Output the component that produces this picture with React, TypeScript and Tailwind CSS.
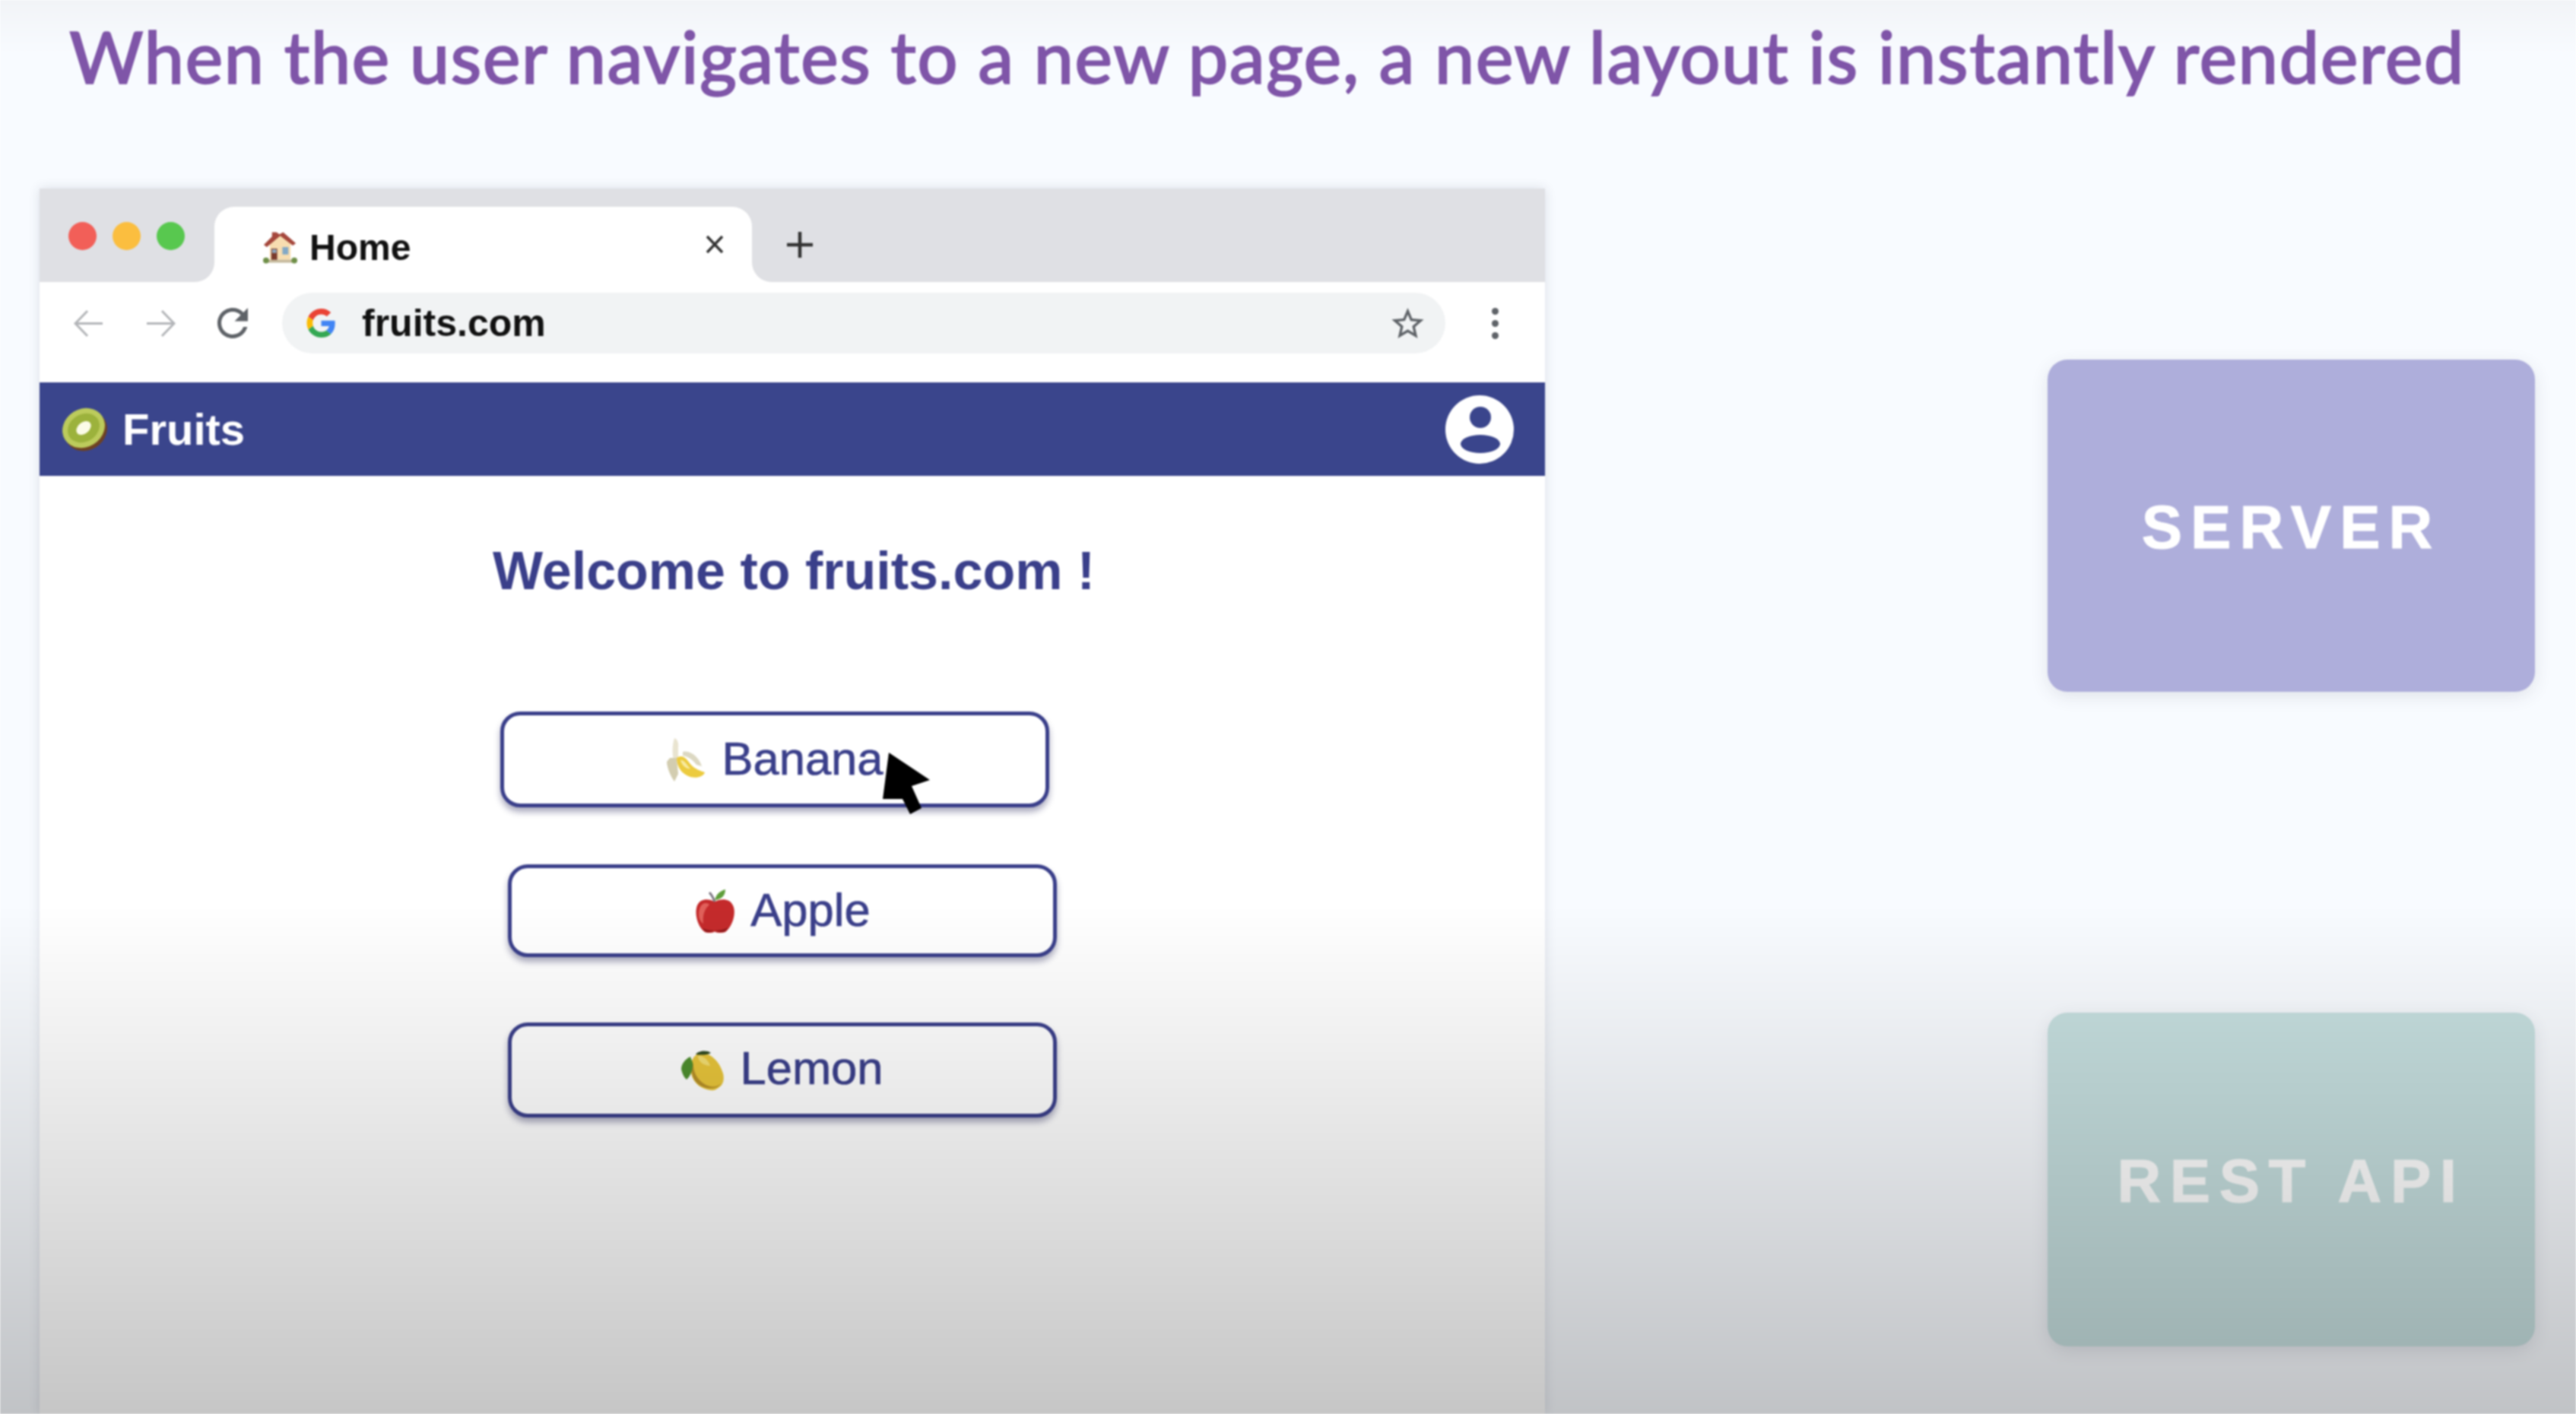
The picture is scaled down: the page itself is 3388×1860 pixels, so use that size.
import React from "react";

const House = () => (
  <svg viewBox="0 0 46 46" className="w-[45px] h-[46px] shrink-0">
    <path d="M9 17 L23 6 L37 17 V40 H9 Z" fill="#f7ddb0" />
    <path d="M1 20 L12 9 V3 H18 L22 6 L27 3 L44 18 L40 21 L23 8 L5 23 Z" fill="#a5473c" />
    <rect x="11" y="25" width="8" height="16" fill="#7a3b2c" />
    <rect x="12" y="26" width="6" height="5" fill="#8fa6bb" />
    <rect x="26" y="23" width="8" height="10" fill="#83a9c6" />
    <rect x="7" y="40" width="32" height="4" fill="#c5b99c" />
    <ellipse cx="4" cy="41" rx="4" ry="4" fill="#6f8f48" />
    <ellipse cx="42" cy="41" rx="4" ry="4" fill="#6f8f48" />
  </svg>
);

const Kiwi = () => (
  <svg viewBox="0 0 60 60" className="w-[60px] h-[60px] shrink-0">
    <ellipse cx="31" cy="32" rx="29" ry="25" transform="rotate(-32 31 32)" fill="#6e4222" />
    <ellipse cx="28" cy="28" rx="29" ry="25" transform="rotate(-32 28 28)" fill="#bccb5c" />
    <ellipse cx="28" cy="28" rx="22" ry="18" transform="rotate(-32 28 28)" fill="#9cb23c" />
    <ellipse cx="28" cy="28" rx="11" ry="7.5" transform="rotate(-40 28 28)" fill="#fbfbe8" />
  </svg>
);

const Banana = () => (
  <svg viewBox="0 0 51 59" className="w-[51px] h-[59px] shrink-0">
    <path d="M11 1 C15 2 17 8 16 14 L16 28 L10 30 C8 22 8 10 11 1 Z" fill="#e9e4d0" />
    <path d="M5 27 L14 27 L16 48 L11 58 C5 50 1 38 1 32 Z" fill="#d3cdb0" />
    <path d="M22 19 C32 16 44 27 47 38 L40 36 C34 28 28 25 22 24 Z" fill="#dcd8c2" />
    <path d="M14 27 C22 22 26 27 32 35 C38 42 46 44 51 46 C49 52 40 54 32 52 C22 49 14 40 14 27 Z" fill="#eccb3f" />
    <path d="M19 30 C24 29 27 36 32 41 C28 42 21 38 19 30 Z" fill="#f8ea9e" />
  </svg>
);

const Apple = () => (
  <svg viewBox="0 0 55 59" className="w-[55px] h-[59px] shrink-0">
    <path d="M27 17 C20 13 8 12 4 22 C0 32 4 50 14 57 C18 59 24 58 27 56.5 C30 58 36 59 41 57 C50 50 56 32 51 22 C47 12 34 13 27 17 Z" fill="#c42a2b" />
    <path d="M14 19 C9 20 6 26 6 34 C6 40 9 44 12 46 C11 36 13 27 20 21 C18 19 16 19 14 19 Z" fill="#e0605a" />
    <path d="M11 52 C20 56 35 56 45 51 C42 55 40 57 37 57 C33 57 30 56 27 55 C24 56 21 57 17 57 C15 57 13 55 11 52 Z" fill="#8f1a1c" />
    <path d="M27 17 C25 12 23 8 20 5" stroke="#7b7580" strokeWidth="3" fill="none" />
    <path d="M27 15 C29 7 34 3 41 1 C41 9 36 14 27 15 Z" fill="#5f9e3a" />
  </svg>
);

const Lemon = () => (
  <svg viewBox="0 0 57 56" className="w-[57px] h-[56px] shrink-0">
    <path d="M26 5 C38 5 50 15 55 32 C57 40 55 47 50 50 C46 53 44 55 38 54 C28 53 16 46 13 32 C11 20 14 7 26 5 Z" fill="#e8c53a" />
    <path d="M16 18 C15 28 20 40 32 47 C40 51 48 50 53 45 C46 55 28 53 19 43 C13 35 12 25 16 18 Z" fill="#b58f28" />
    <path d="M22 9 C28 8 36 14 38 22 C32 22 22 18 22 9 Z" fill="#f3de72" />
    <path d="M12 10 C5 13 0 20 0 26 C1 32 4 38 7 40 C12 36 16 26 15 18 Z" fill="#4e8f2e" />
    <path d="M19 7 C22 2 34 1 39 5 C34 8 26 8 19 7 Z" fill="#2f4a20" />
  </svg>
);

const Google = () => (
  <svg viewBox="0 0 48 48" className="w-[39px] h-[38px] shrink-0">
    <path fill="#EA4335" d="M24 9.5c3.54 0 6.71 1.22 9.21 3.6l6.85-6.85C35.9 2.38 30.47 0 24 0 14.62 0 6.51 5.38 2.56 13.22l7.98 6.19C12.43 13.72 17.74 9.5 24 9.5z" />
    <path fill="#4285F4" d="M46.98 24.55c0-1.57-.15-3.09-.38-4.55H24v9.02h12.94c-.58 2.96-2.26 5.48-4.78 7.18l7.73 6c4.51-4.18 7.09-10.36 7.09-17.65z" />
    <path fill="#FBBC05" d="M10.53 28.59c-.48-1.45-.76-2.99-.76-4.59s.27-3.14.76-4.59l-7.98-6.19C.92 16.46 0 20.12 0 24c0 3.88.92 7.54 2.56 10.78l7.97-6.19z" />
    <path fill="#34A853" d="M24 48c6.48 0 11.93-2.13 16.09-5.81l-7.73-6c-2.15 1.45-4.92 2.3-8.36 2.3-6.26 0-11.57-4.22-13.47-9.91l-7.98 6.19C6.51 42.62 14.62 48 24 48z" />
  </svg>
);

const Fruit = ({ icon, label, gap, className, lift }: { icon: React.ReactNode; label: string; gap: string; className: string; lift: string }) => (
  <div className={`relative flex items-center justify-center rounded-[26px] border-[5px] border-[#3a3f8a] shadow-[0_6px_9px_rgba(40,40,90,0.4)] ${gap} ${className}`}>
    {icon}
    <span className={`text-[61.5px] leading-none text-[#3a3f8a] [-webkit-text-stroke:0.7px_#3a3f8a] ${lift}`}>{label}</span>
  </div>
);

const Card = ({ label, bg, tracking, className }: { label: string; bg: string; tracking: string; className: string }) => (
  <div className={`flex items-center justify-center rounded-[26px] pt-[5px] shadow-[0_6px_24px_-2px_rgba(60,60,80,0.14)] ${bg} ${className}`}>
    <span className={`text-[80px] leading-none font-bold text-white [-webkit-text-stroke:1px_white] ${tracking}`}>{label}</span>
  </div>
);

export default function App() {
  return (
    <div className="relative w-[3388px] h-[1860px] overflow-hidden flex flex-col bg-[linear-gradient(180deg,#f2f4f7_0px,#f8fbff_70px)] font-['Liberation_Sans',sans-serif] blur-[0.8px]">
      <header className="h-[248px] shrink-0 pl-[91px] pt-[14px]">
        <h1 className="text-[94px] leading-[120px] font-medium tracking-[1.3px] whitespace-nowrap text-[#7f55a8] [-webkit-text-stroke:1.5px_#7f55a8] font-['Lato',sans-serif]">
          When the user navigates to a new page, a new layout is instantly rendered
        </h1>
      </header>

      <main className="flex flex-1 items-stretch min-h-0">
        <section className="ml-[52px] w-[1980px] flex flex-col bg-white shadow-[0_0_14px_rgba(40,50,80,0.14)]">
          {/* tab strip */}
          <div className="h-[24px] bg-[#dfe0e4]" />
          <div className="h-[99px] flex bg-white">
            <div className="w-[230px] bg-[#dfe0e4] rounded-br-[26px] flex items-start gap-[21px] pl-[38px] pt-[20px]">
              <span className="w-[37px] h-[37px] rounded-full bg-[#f25f58]" />
              <span className="w-[37px] h-[37px] rounded-full bg-[#fbbe3f]" />
              <span className="w-[37px] h-[37px] rounded-full bg-[#58c84f]" />
            </div>
            <div className="w-[707px] bg-[#dfe0e4]">
              <div className="h-full bg-white rounded-t-[26px] flex items-center pl-[64px] pr-[36px] pt-[6px]">
                <House />
                <span className="ml-[16px] mt-[2px] text-[48px] leading-none font-bold text-[#111]">Home</span>
                <svg viewBox="0 0 26 25" className="ml-auto -mt-[6px] w-[26px] h-[25px]">
                  <path d="M3 2 L23 23 M23 2 L3 23" stroke="#333" strokeWidth="3.5" fill="none" />
                </svg>
              </div>
            </div>
            <div className="flex-1 bg-[#dfe0e4] rounded-bl-[26px] flex items-center pl-[45px]">
              <svg viewBox="0 0 36 36" className="w-[36px] h-[36px]">
                <path d="M18 1 V35 M1 18 H35" stroke="#333" strokeWidth="4.5" fill="none" />
              </svg>
            </div>
          </div>

          {/* toolbar */}
          <div className="h-[132px] pt-[14px]">
            <div className="h-[80px] flex items-center pl-[45px]">
              <svg viewBox="0 0 39 37" className="w-[39px] h-[37px]">
                <path d="M38 18.5 H3 M18 2 L2 18.5 L18 35" stroke="#b3b5b8" strokeWidth="3" fill="none" />
              </svg>
              <svg viewBox="0 0 39 37" className="ml-[56px] w-[39px] h-[37px]">
                <path d="M1 18.5 H36 M21 2 L37 18.5 L21 35" stroke="#b3b5b8" strokeWidth="3" fill="none" />
              </svg>
              <svg viewBox="4 4 16 16" className="ml-[54px] w-[42px] h-[40px]">
                <path fill="#5f6368" d="M17.65 6.35A7.958 7.958 0 0 0 12 4c-4.42 0-7.99 3.58-7.99 8s3.57 8 7.99 8c3.73 0 6.84-2.55 7.73-6h-2.08A5.99 5.99 0 0 1 12 18c-3.31 0-6-2.69-6-6s2.69-6 6-6c1.66 0 3.14.69 4.22 1.78L13 11h7V4l-2.35 2.35z" />
              </svg>
              <div className="ml-[44px] w-[1530px] h-[80px] rounded-full bg-[#f1f3f4] flex items-center pl-[32px] pr-[28px]">
                <Google />
                <span className="ml-[34px] text-[50px] leading-none font-bold text-[#111]">fruits.com</span>
                <svg viewBox="2 2 20 19" className="ml-auto w-[43px] h-[40px]">
                  <path fill="#5f6368" d="M22 9.24l-7.19-.62L12 2 9.19 8.63 2 9.24l5.46 4.73L5.82 21 12 17.27 18.18 21l-1.63-7.03L22 9.24zM12 15.4l-3.76 2.27 1-4.28-3.32-2.88 4.38-.38L12 6.1l1.71 4.04 4.38.38-3.32 2.88 1 4.28L12 15.4z" />
                </svg>
              </div>
              <div className="ml-[61px] flex flex-col gap-[7px]">
                <span className="w-[9px] h-[9px] rounded-full bg-[#5f6368]" />
                <span className="w-[9px] h-[9px] rounded-full bg-[#5f6368]" />
                <span className="w-[9px] h-[9px] rounded-full bg-[#5f6368]" />
              </div>
            </div>
          </div>

          {/* app bar */}
          <div className="h-[123px] bg-[#3a458c] flex items-center pl-[30px] pr-[41px]">
            <Kiwi />
            <span className="ml-[19px] text-[58px] leading-none font-bold text-white">Fruits</span>
            <svg viewBox="0 0 90 90" className="ml-auto w-[90px] h-[90px]">
              <circle cx="45" cy="45" r="45" fill="#fff" />
              <circle cx="46" cy="29" r="14" fill="#3a458c" />
              <ellipse cx="46" cy="64" rx="26" ry="12" fill="#3a458c" />
            </svg>
          </div>

          {/* page */}
          <div className="flex-1 flex flex-col items-start pt-[85px]">
            <h2 className="ml-[596px] text-[70px] leading-[80px] font-bold text-[#3a3f8a] whitespace-nowrap">Welcome to fruits.com !</h2>
            <Fruit icon={<Banana />} label="Banana" gap="gap-[22px]" lift="-mt-[3px]" className="ml-[606px] mt-[145px] w-[722px] h-[126px]" />
            <Fruit icon={<Apple />} label="Apple" gap="gap-[19px]" lift="-mt-[3px]" className="ml-[616px] mt-[75px] w-[722px] h-[122px]" />
            <Fruit icon={<Lemon />} label="Lemon" gap="gap-[20px]" lift="-mt-[5px]" className="ml-[616px] mt-[86px] w-[722px] h-[125px]" />
          </div>
        </section>

        <aside className="ml-[661px] w-[641px] pt-[225px] flex flex-col gap-[422px]">
          <Card label="SERVER" bg="bg-[#aeaedb]" tracking="tracking-[11px]" className="h-[437px]" />
          <Card label="REST API" bg="bg-[#c6dfdf]" tracking="tracking-[11.5px]" className="h-[439px]" />
        </aside>
      </main>

      {/* mouse pointer */}
      <svg viewBox="0 0 66 84" className="absolute left-[1159px] top-[989px] w-[66px] h-[84px]">
        <path d="M10 1 L64 37 L40 45 L53 74 L38 82 L28 62 L2 62 Z" fill="#000" />
      </svg>

      {/* video fade */}
      <div className="absolute inset-x-0 bottom-0 h-[670px] pointer-events-none bg-linear-to-b from-[rgba(0,0,0,0)] to-[rgba(0,0,0,0.225)]" />
    </div>
  );
}
